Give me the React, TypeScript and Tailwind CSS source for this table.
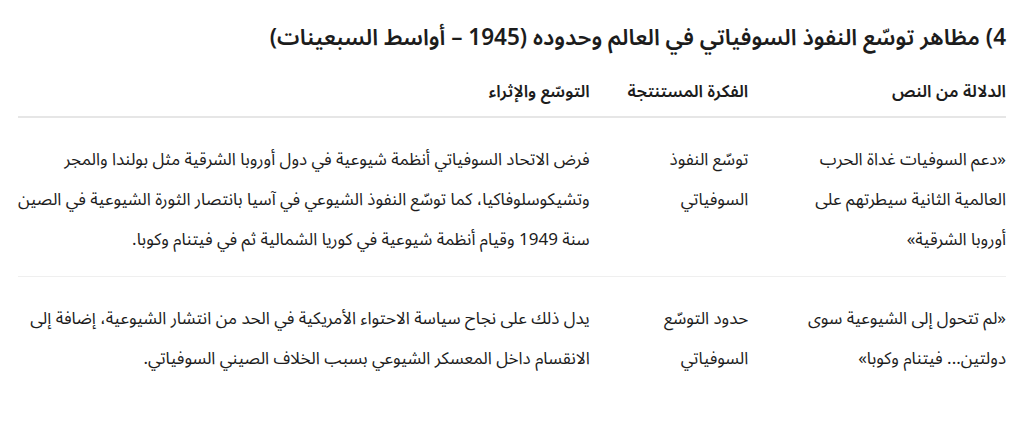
const rows = [
  {
    quote: ['«دعم السوفيات غداة الحرب', 'العالمية الثانية سيطرتهم على', 'أوروبا الشرقية»'],
    idea: ['توسّع النفوذ', 'السوفياتي'],
    more: [
      'فرض الاتحاد السوفياتي أنظمة شيوعية في دول أوروبا الشرقية مثل بولندا والمجر',
      'وتشيكوسلوفاكيا، كما توسّع النفوذ الشيوعي في آسيا بانتصار الثورة الشيوعية في الصين',
      'سنة 1949 وقيام أنظمة شيوعية في كوريا الشمالية ثم في فيتنام وكوبا.',
    ],
  },
  {
    quote: ['«لم تتحول إلى الشيوعية سوى', 'دولتين... فيتنام وكوبا»'],
    idea: ['حدود التوسّع', 'السوفياتي'],
    more: [
      'يدل ذلك على نجاح سياسة الاحتواء الأمريكية في الحد من انتشار الشيوعية، إضافة إلى',
      'الانقسام داخل المعسكر الشيوعي بسبب الخلاف الصيني السوفياتي.',
    ],
  },
];

export default function App() {
  return (
    <div
      dir="rtl"
      className="w-[1024px] h-[427px] bg-white text-[#1c1c1c] px-[18px] pt-[18px] font-['Noto_Sans_Arabic','Noto_Sans','DejaVu_Sans',sans-serif]"
    >
      <h1 className="text-[22.5px] font-semibold leading-[40px] mb-[20px]">
        4) مظاهر توسّع النفوذ السوفياتي في العالم وحدوده (1945 – أواسط السبعينات)
      </h1>
      <table className="w-full border-collapse text-right">
        <thead>
          <tr className="border-b-2 border-[#e6e6e6]">
            <th className="w-[261px] pb-[10px] text-[17px] font-semibold leading-[28px]">الدلالة من النص</th>
            <th className="w-[160px] pb-[10px] text-[17px] font-semibold leading-[28px]">الفكرة المستنتجة</th>
            <th className="pb-[10px] text-[17px] font-semibold leading-[28px]">التوسّع والإثراء</th>
          </tr>
        </thead>
        <tbody>
          {rows.map((r, i) => (
            <tr key={i} className={i === 0 ? 'border-b border-[#efefef]' : ''}>
              <td className="align-top pt-[22px] pb-[16px] text-[17px] leading-[40px]">
                {r.quote.map((l, j) => (
                  <div key={j}>{l}</div>
                ))}
              </td>
              <td className="align-top pt-[22px] pb-[16px] text-[17px] leading-[40px]">
                {r.idea.map((l, j) => (
                  <div key={j}>{l}</div>
                ))}
              </td>
              <td className="align-top pt-[22px] pb-[16px] text-[17px] leading-[40px]">
                {r.more.map((l, j) => (
                  <div key={j} className="whitespace-nowrap">{l}</div>
                ))}
              </td>
            </tr>
          ))}
        </tbody>
      </table>
    </div>
  );
}
